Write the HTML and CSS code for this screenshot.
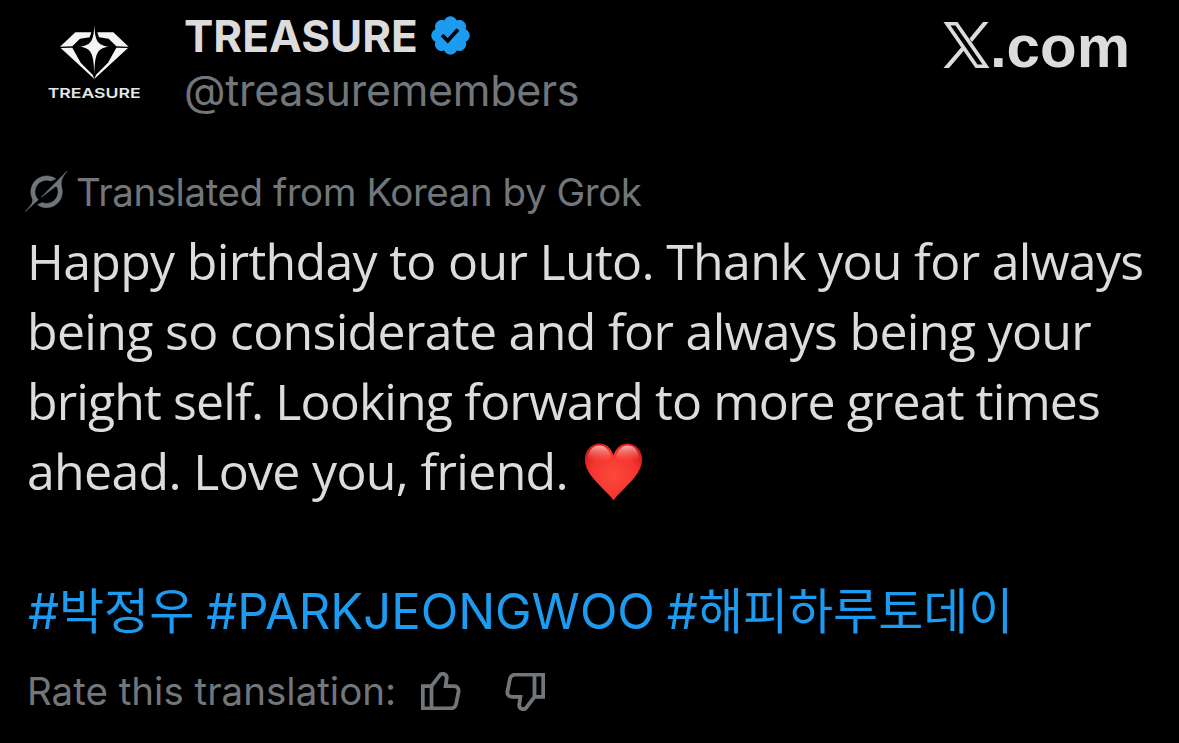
FILE: index.html
```html
<!DOCTYPE html>
<html lang="en">
<head>
    <meta charset="UTF-8">
    <meta name="viewport" content="width=device-width, initial-scale=1.0">
    <title>TREASURE on X</title>
    <link rel="stylesheet" href="styles.css">
</head>
<body>
    <article class="post">
        <header class="post-header">
            <svg class="avatar" viewBox="0 0 390 300" role="img" aria-label="TREASURE">
                <g fill="#f4f4f4">
                    <path d="M90 110L136 67H184L179 82L150 86L127 109Z"/>
                    <path d="M296 110L250 67H202L207 82L236 86L259 109Z"/>
                    <path d="M92 114L127 113L152 158L188 194L193 207Z"/>
                    <path d="M294 114L259 113L234 158L198 194L193 207Z"/>
                    <path d="M193 44C195 92 202 105 236 110C202 115 195 128 193 194C191 128 184 115 150 110C184 105 191 92 193 44Z"/>
                </g>
                <text x="53" y="263" textLength="279" lengthAdjust="spacingAndGlyphs">TREASURE</text>
            </svg>
            <div class="author">
                <div class="name-row">
                    <span class="name">TREASURE</span>
                    <svg class="badge" viewBox="0 0 22 22"><path d="M20.396 11c-.018-.646-.215-1.275-.57-1.816-.354-.54-.852-.972-1.438-1.246.223-.607.27-1.264.14-1.897-.131-.634-.437-1.218-.882-1.687-.47-.445-1.053-.75-1.687-.882-.633-.13-1.29-.083-1.897.14-.273-.587-.704-1.086-1.245-1.44S11.647 1.62 11 1.604c-.646.017-1.273.213-1.813.568s-.969.854-1.24 1.44c-.608-.223-1.267-.272-1.902-.14-.635.13-1.22.436-1.69.882-.445.47-.749 1.055-.878 1.688-.13.633-.08 1.29.144 1.896-.587.274-1.087.705-1.443 1.245-.356.54-.555 1.17-.574 1.817.02.647.218 1.276.574 1.817.356.54.856.972 1.443 1.245-.224.606-.274 1.263-.144 1.896.13.634.433 1.218.877 1.688.47.443 1.054.747 1.687.878.633.132 1.29.084 1.897-.136.274.586.705 1.084 1.246 1.439.54.354 1.17.551 1.816.569.647-.016 1.276-.213 1.817-.567s.972-.854 1.245-1.44c.604.239 1.266.296 1.903.164.636-.132 1.22-.447 1.68-.907.46-.46.776-1.044.908-1.681s.075-1.299-.165-1.903c.586-.274 1.084-.705 1.439-1.246.354-.54.551-1.17.569-1.816zM9.662 14.85l-3.429-3.428 1.293-1.302 2.072 2.072 4.4-4.794 1.347 1.246z"/></svg>
                </div>
                <div class="handle">@treasuremembers</div>
            </div>
            <div class="site">
                <svg class="x-logo" viewBox="0 0 46 46">
                    <path fill-rule="evenodd" d="M0 0H14L46 46H32ZM7 3.6L34 42.4H39L12 3.6Z"/>
                    <path d="M39.5 0H45L28.5 20L26 16.5ZM0 46H5.5L20.5 28.5L18 25Z"/>
                </svg>
                <span>.com</span>
            </div>
        </header>

        <div class="translated">
            <svg class="grok" viewBox="0 0 33 32"><path d="M12.745 20.54l10.97-8.19c.539-.4 1.307-.244 1.564.38 1.349 3.288.746 7.241-1.938 9.955-2.683 2.714-6.417 3.31-9.83 1.954l-3.728 1.745c5.347 3.697 11.84 2.782 15.898-1.324 3.219-3.255 4.216-7.692 3.284-11.693l.008.009c-1.351-5.878.332-8.227 3.782-13.031L33 0l-4.54 4.59v-.014L12.743 20.544m-2.263 1.987c-3.837-3.707-3.175-9.446.1-12.755 2.42-2.449 6.388-3.448 9.852-1.979l3.72-1.737c-.67-.49-1.53-1.017-2.515-1.387-4.455-1.854-9.789-.931-13.41 2.728-3.483 3.523-4.579 8.94-2.697 13.561 1.405 3.454-.899 5.898-3.22 8.364C1.49 30.2.666 31.074 0 32l10.478-9.466"/></svg>
            <span>Translated from Korean by Grok</span>
        </div>

        <div class="post-text">
            <div class="line">Happy birthday to our Luto. Thank you for always</div>
            <div class="line">being so considerate and for always being your</div>
            <div class="line line-tight">bright self. Looking forward to more great times</div>
            <div class="line line-heart">
                <span>ahead. Love you, friend.</span>
                <svg class="heart" viewBox="0 0 57 58">
                    <defs>
                        <radialGradient id="heartFill" cx="50%" cy="55%" r="60%">
                            <stop offset="0" stop-color="#fb4a3c"/>
                            <stop offset="0.65" stop-color="#f6352e"/>
                            <stop offset="1" stop-color="#d81a1c"/>
                        </radialGradient>
                        <linearGradient id="heartShine" x1="0" y1="0" x2="0" y2="1">
                            <stop offset="0" stop-color="#fff" stop-opacity="0.65"/>
                            <stop offset="1" stop-color="#ff8070" stop-opacity="0"/>
                        </linearGradient>
                    </defs>
                    <path fill="url(#heartFill)" d="M28.500 57.500C25 52 15 43.500 8 35C3 29 0 23 0 16.500C0 7 6.500 0.500 14.500 0.500C21 0.500 26 4.500 28.500 12.500C31 4.500 36 0.500 42.500 0.500C50.500 0.500 57 7 57 16.500C57 23 54 29 49 35C42 43.500 32 52 28.500 57.500Z"/>
                    <path fill="url(#heartShine)" d="M3 15C3.500 7 8.500 2.500 14.500 2.500C20 2.500 24.500 7 26 14C20 20 8 20 3 15ZM54 15C53.500 7 48.500 2.500 42.500 2.500C37 2.500 32.500 7 31 14C37 20 49 20 54 15Z"/>
                </svg>
            </div>
            <div class="line">&nbsp;</div>
            <div class="line tags">
                <a class="tag-kr">#박정우</a>
                <a class="tag-en">#PARKJEONGWOO</a>
                <a class="tag-kr">#해피하루토데이</a>
            </div>
        </div>

        <footer class="rate">
            <span>Rate this translation:</span>
            <svg class="thumb" viewBox="0 0 40 38"><path d="M10.500 14.200L18.500 3.600C20.500 0.500 26.300 1.800 25.700 6.400L24.600 14.200H33C36.400 14.200 38.100 16.600 37.500 19.800L35.200 31.500C34.600 34.500 32.600 36.300 29.600 36.300H1.800V14.200H10.500V36.300"/></svg>
            <svg class="thumb thumb-down" viewBox="0 0 40 38"><path d="M10.500 14.200L18.500 3.600C20.500 0.500 26.300 1.800 25.700 6.400L24.600 14.200H33C36.400 14.200 38.100 16.600 37.500 19.800L35.200 31.500C34.600 34.500 32.600 36.300 29.600 36.300H1.800V14.200H10.500V36.300"/></svg>
        </footer>
    </article>
</body>
</html>
```
FILE: styles.css
```css
body {
    margin: 0;
    background-color: #000;
    color: #dcdcdc;
    font-family: "Inter", "Noto Sans CJK KR", sans-serif;
}

.post {
    height: 743px;
    padding: 8px 27px 0;
    box-sizing: border-box;
    overflow: hidden;
    white-space: nowrap;
}

.post-header {
    display: flex;
    align-items: flex-start;
    height: 162px;
}

.avatar {
    width: 130px;
    height: 100px;
    margin: 2px 24px 0 3px;
}

.avatar text {
    fill: #e6e6e6;
    font-size: 41px;
    font-weight: 600;
}

.name-row {
    display: flex;
    align-items: center;
    height: 56px;
    gap: 10px;
}

.name {
    font-size: 44px;
    font-weight: 700;
    line-height: 56px;
}

.badge {
    width: 45px;
    height: 45px;
    margin-bottom: 2px;
    fill: #1d9bf0;
}

.handle {
    color: #71767b;
    font-size: 43px;
    line-height: 52px;
    letter-spacing: -0.3px;
}

.site {
    display: flex;
    align-items: flex-start;
    margin: 14px 22px 0 auto;
    font-family: "Liberation Sans", sans-serif;
    font-size: 60px;
    font-weight: 700;
    line-height: 50px;
}

.x-logo {
    width: 47px;
    height: 46px;
    fill: #dcdcdc;
}

.translated {
    display: flex;
    align-items: center;
    gap: 9px;
    height: 44px;
    margin-left: -2px;
    color: #71767b;
    font-size: 38.5px;
    letter-spacing: -0.45px;
}

.grok {
    width: 42px;
    height: 41px;
    margin-bottom: 1px;
    fill: #71767b;
    stroke: #71767b;
    stroke-width: 0.4;
}

.post-text {
    margin-top: 12px;
    font-family: "Open Sans", "Noto Sans CJK KR", sans-serif;
    font-size: 50px;
    font-weight: 430;
    letter-spacing: -0.68px;
}

.line {
    height: 70px;
    line-height: 70px;
}

.line-tight {
    letter-spacing: -0.88px;
}

.line-heart {
    display: flex;
}

.heart {
    width: 57px;
    height: 58px;
    margin: 7px 0 0 17px;
}

.tags {
    display: flex;
    gap: 12px;
    padding: 1px 0 0 1px;
    box-sizing: border-box;
    color: #1d9bf0;
    font-family: "Inter", "Noto Sans CJK KR", sans-serif;
    font-weight: 400;
    letter-spacing: 0;
}

.tag-en {
    font-size: 49px;
}

.tag-kr {
    font-size: 49px;
}

.rate {
    display: flex;
    align-items: center;
    height: 40px;
    margin-top: 25px;
    color: #71767b;
    font-size: 38.5px;
}

.thumb {
    width: 40px;
    height: 38px;
    margin: 0 0 1px 25px;
    fill: none;
    stroke: #71767b;
    stroke-width: 3.8;
}

.thumb-down {
    margin: 1px 0 0 44px;
    transform: rotate(180deg);
}
```
